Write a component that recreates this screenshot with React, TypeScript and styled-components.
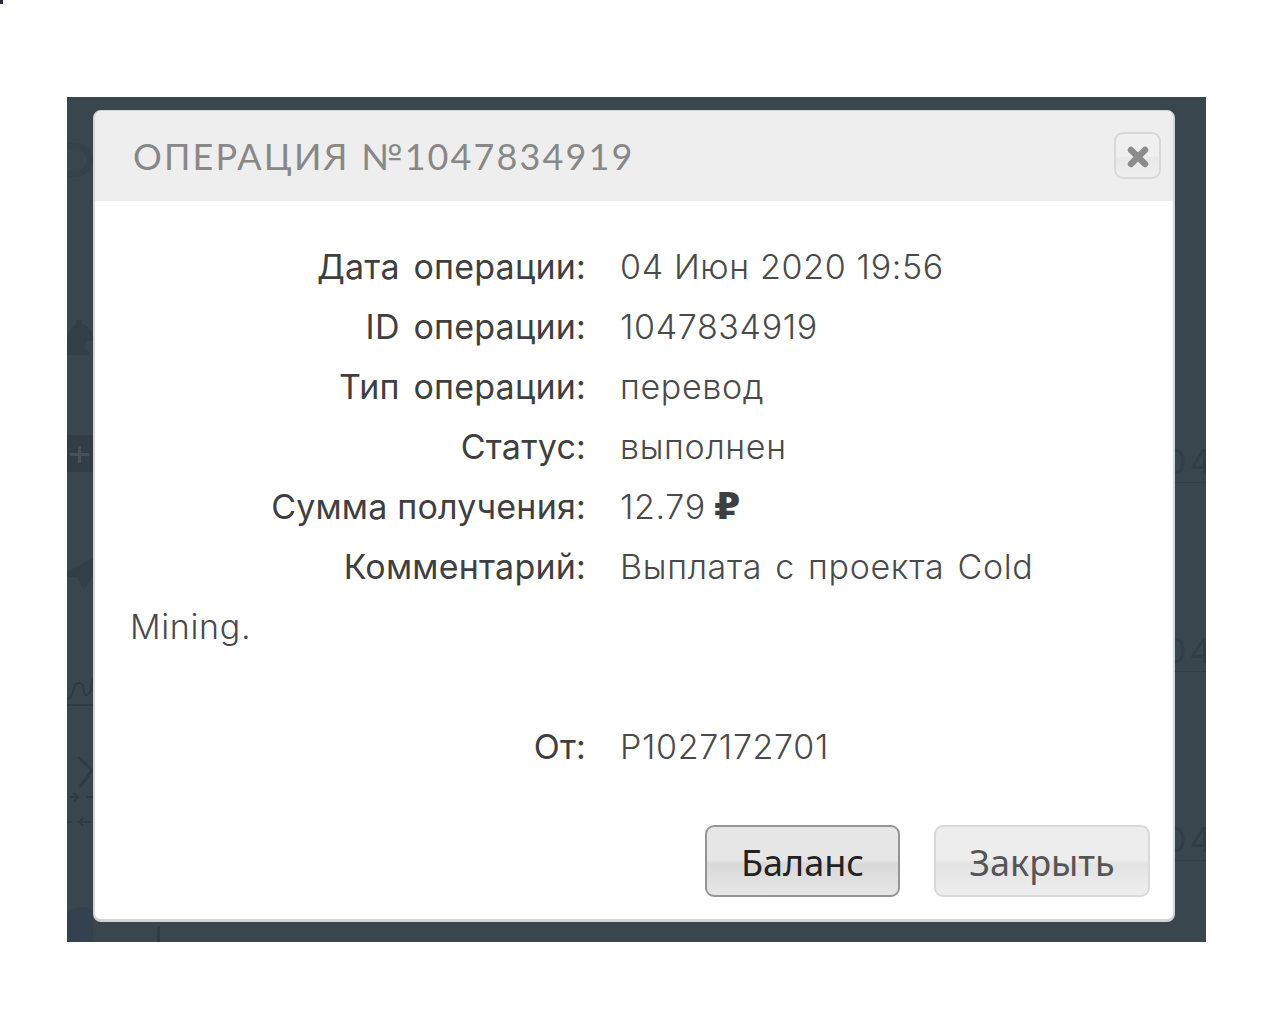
import styled, { createGlobalStyle } from "styled-components";

const GlobalStyle = createGlobalStyle`
  html, body {
    margin: 0;
    padding: 0;
    background: #fff;
  }
`;

const Page = styled.div`
  position: relative;
  width: 1280px;
  height: 1024px;
  padding: 97px 0 0 67px;
  box-sizing: border-box;
  overflow: hidden;
`;

const Speck = styled.div`
  position: absolute;
  top: 0;
  left: 0;
  width: 3px;
  height: 4px;
  background: #2a2a38;
`;

const Backdrop = styled.div`
  position: relative;
  width: 1139px;
  height: 845px;
  display: flex;
  align-items: flex-start;
  background: #3a464e;
  overflow: hidden;
`;

const GhostTick = styled.div`
  position: absolute;
  left: 90px;
  bottom: 0;
  width: 3px;
  height: 16px;
  background: #2f3b44;
`;

const LeftStrip = styled.svg`
  flex: none;
  display: block;
  width: 26px;
  height: 845px;
`;

const RightStrip = styled.div`
  flex: 1;
  min-width: 0;
  padding-top: 345px;
  display: flex;
  flex-direction: column;
  gap: 148px;
  overflow: hidden;
`;

const GhostAmount = styled.div`
  height: 40px;
  border-bottom: 1px dotted #2c373f;
  overflow: hidden;
`;

const GhostDigits = styled.div`
  margin-left: -10px;
  font: 400 34px/40px Inter, sans-serif;
  letter-spacing: 3px;
  color: #323d45;
  white-space: nowrap;
`;

const Modal = styled.div`
  flex: none;
  width: 1082px;
  height: 812px;
  margin-top: 13px;
  box-sizing: border-box;
  display: flex;
  flex-direction: column;
  background: #fff;
  border-radius: 8px;
  border: 2px solid #d2d4d5;
  border-top-width: 1px;
  border-bottom-width: 3px;
  overflow: hidden;
`;

const Header = styled.div`
  flex: none;
  height: 90px;
  display: flex;
  align-items: center;
  justify-content: space-between;
  padding: 0 12px 1px 38px;
  box-sizing: border-box;
  background: #eeeeee;
`;

const Title = styled.h1`
  margin: 0;
  font: 400 36px/1 Lato, "Open Sans", sans-serif;
  letter-spacing: 2.1px;
  color: #888888;
`;

const CloseButton = styled.button`
  width: 47px;
  height: 47px;
  padding: 3px 0 0;
  display: flex;
  align-items: center;
  justify-content: center;
  box-sizing: border-box;
  border: 2px solid #d8d8d8;
  border-radius: 9px;
  background: linear-gradient(#efefef 0 50%, #e8e8e8 56%, #eeeeee 100%);
`;

const Details = styled.div`
  flex: 1;
  padding: 36px 33px 0 35px;
  font: 300 34px/60px Inter, sans-serif;
  letter-spacing: 0.65px;
  color: #4a4a4a;
`;

const Row = styled.div`
  min-height: 60px;
`;

const Label = styled.span`
  display: inline-block;
  width: 456px;
  margin-right: 34px;
  text-align: right;
  font-weight: 400;
  letter-spacing: 0.2px;
  color: #3f3f3f;
`;

const OperationLabel = styled(Label)`
  word-spacing: 4px;
`;

const Comment = styled.span`
  word-spacing: 3px;
`;

const Ruble = styled.b`
  margin-left: -2px;
  font-family: "DejaVu Sans", sans-serif;
  font-size: 38px;
  line-height: 1;
  font-weight: 700;
  letter-spacing: 0;
  color: #3f3f3f;
`;

const Spacer = styled.div`
  height: 60px;
`;

const Footer = styled.div`
  flex: none;
  display: flex;
  justify-content: flex-end;
  gap: 34px;
  padding: 0 23px 22px 0;
`;

const ActionButton = styled.button<{ $primary?: boolean }>`
  height: 72px;
  width: ${(p) => (p.$primary ? "195px" : "216px")};
  padding: 4px 0 0;
  box-sizing: border-box;
  border: 2px solid ${(p) => (p.$primary ? "#959595" : "#d9d9d9")};
  border-radius: 9px;
  font: 400 36px/1 "Noto Sans", sans-serif;
  color: ${(p) => (p.$primary ? "#222222" : "#555555")};
  background: ${(p) =>
    p.$primary
      ? "linear-gradient(#e6e6e6 0 48%, #d9d9d9 54%, #e6e6e6 100%)"
      : "linear-gradient(#ededed 0 48%, #e3e3e3 54%, #eeeeee 100%)"};
`;

export default function App() {
  return (
    <Page>
      <GlobalStyle />
      <Speck />
      <Backdrop>
        <LeftStrip viewBox="0 0 26 845" fill="#333f47" aria-hidden>
          <path d="M0 46h8c10 0 18 7 18 17s-8 17-18 17H0v-6h8c7 0 12-5 12-11s-5-11-12-11H0z" fill="#34424c" />
          <path d="M0 256v-12c0-8 4-14 9-17v-4h6v4c5 2 11 6 11 13v4h-6l-3 6 5 5v3H0z" />
          <rect x="0" y="338" width="26" height="37" fill="#323d45" />
          <path d="M11 349h3v7h8v3h-8v7h-3v-7H3v-3h8z" fill="#46525a" />
          <path d="M0 475l26-14v17l-9 15-7-13H0z" />
          <path d="M0 608h26M0 602c8 0 4-16 12-16s2 14 8 12 4-12 6-18" fill="none" stroke="#2f3b43" strokeWidth="2" />
          <path d="M11 660l14 13-12 17" fill="none" stroke="#2f3b43" strokeWidth="3" />
          <path d="M3 700h8l-4-4m4 4l-4 4M20 700h6M0 725h5M10 725h14m-8-4l-4 4 4 4" fill="none" stroke="#2f3b43" strokeWidth="2" />
          <circle cx="15" cy="832" r="22" fill="#33424e" />
        </LeftStrip>
        <Modal>
          <Header>
            <Title>ОПЕРАЦИЯ №1047834919</Title>
            <CloseButton aria-label="Закрыть">
              <svg width="24" height="24" viewBox="0 0 24 24" fill="none" stroke="#8c8c8c" strokeWidth="6.5" strokeLinecap="round">
                <path d="M5 5l14 14M19 5L5 19" />
              </svg>
            </CloseButton>
          </Header>
          <Details>
            <Row><OperationLabel>Дата операции:</OperationLabel>04 Июн 2020 19:56</Row>
            <Row><OperationLabel>ID операции:</OperationLabel>1047834919</Row>
            <Row><OperationLabel>Тип операции:</OperationLabel>перевод</Row>
            <Row><Label>Статус:</Label>выполнен</Row>
            <Row><Label>Сумма получения:</Label>12.79 <Ruble>₽</Ruble></Row>
            <Row><Label>Комментарий:</Label><Comment>Выплата с проекта Cold Mining.</Comment></Row>
            <Spacer />
            <Row><Label>От:</Label>P1027172701</Row>
          </Details>
          <Footer>
            <ActionButton $primary>Баланс</ActionButton>
            <ActionButton>Закрыть</ActionButton>
          </Footer>
        </Modal>
        <RightStrip>
          <GhostAmount><GhostDigits>04</GhostDigits></GhostAmount>
          <GhostAmount><GhostDigits>04</GhostDigits></GhostAmount>
          <GhostAmount><GhostDigits>04</GhostDigits></GhostAmount>
        </RightStrip>
        <GhostTick />
      </Backdrop>
    </Page>
  );
}
